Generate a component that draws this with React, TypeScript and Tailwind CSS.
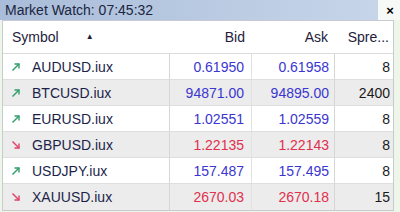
import React from 'react'

type Quote = {
  symbol: string
  bid: string
  ask: string
  spread: string
  up: boolean
}

const quotes: Quote[] = [
  { symbol: 'AUDUSD.iux', bid: '0.61950', ask: '0.61958', spread: '8', up: true },
  { symbol: 'BTCUSD.iux', bid: '94871.00', ask: '94895.00', spread: '2400', up: true },
  { symbol: 'EURUSD.iux', bid: '1.02551', ask: '1.02559', spread: '8', up: true },
  { symbol: 'GBPUSD.iux', bid: '1.22135', ask: '1.22143', spread: '8', up: false },
  { symbol: 'USDJPY.iux', bid: '157.487', ask: '157.495', spread: '8', up: true },
  { symbol: 'XAUUSD.iux', bid: '2670.03', ask: '2670.18', spread: '15', up: false },
]

function TrendArrow({ up }: { up: boolean }) {
  const color = up ? '#2e9e6a' : '#e0406a'
  return (
    <svg width="10" height="10" viewBox="0 0 10 10" className="shrink-0">
      {up ? (
        <>
          <path d="M1.5 8.5 L8 2" stroke={color} strokeWidth="1.4" fill="none" />
          <path d="M3.5 2 H8 V6.5" stroke={color} strokeWidth="1.4" fill="none" />
        </>
      ) : (
        <>
          <path d="M1.5 1.5 L8 8" stroke={color} strokeWidth="1.4" fill="none" />
          <path d="M3.5 8 H8 V3.5" stroke={color} strokeWidth="1.4" fill="none" />
        </>
      )}
    </svg>
  )
}

export default function App() {
  return (
    <div
      className="w-[400px] h-[212px] overflow-hidden bg-[#eef6ea] text-[14px] leading-none"
      style={{ fontFamily: '"Liberation Sans", Arial, sans-serif' }}
    >
      {/* Title bar */}
      <div className="flex h-[20px] items-center bg-[#f7f9f6]">
        <div className="flex h-full w-[378px] items-center bg-gradient-to-r from-[#a9bcd9] to-[#c6d5e9] pl-[5px] text-[#1b2640]">
          Market Watch: 07:45:32
        </div>
        <div className="flex flex-1 items-center justify-center pl-[2px] text-[13px] font-bold text-black">
          ×
        </div>
      </div>

      {/* Table */}
      <div className="ml-[2px] mr-[6px] border-t border-l border-r border-b border-[#c8ccd2] bg-white">
        <div className="flex h-[33px] items-center border-b border-[#dcdcdc] text-[#241c3a]">
          <div className="flex w-[167px] items-center pl-[9px]">
            <span>Symbol</span>
            <span className="ml-[27px] text-[8px]">▲</span>
          </div>
          <div className="w-[82px] pr-[7px] text-right">Bid</div>
          <div className="w-[83px] pr-[7px] text-right">Ask</div>
          <div className="flex-1 pr-[4px] text-right">Spre...</div>
        </div>

        {quotes.map((q, i) => (
          <div
            key={q.symbol}
            className={
              'flex h-[26px] items-center border-b border-[#dedede] last:border-b-0 ' +
              (i % 2 === 1 ? 'bg-[#ececec]' : 'bg-white')
            }
          >
            <div className="flex h-full w-[167px] items-center gap-[11px] border-r border-[#d6d6d6] pl-[8px] text-[#1c1f4a]">
              <TrendArrow up={q.up} />
              <span>{q.symbol}</span>
            </div>
            <div
              className={
                'flex h-full w-[82px] items-center justify-end border-r border-[#e2e2e2] pr-[7px] ' +
                (q.up ? 'text-[#3a36d0]' : 'text-[#e0304e]')
              }
            >
              {q.bid}
            </div>
            <div
              className={
                'flex h-full w-[83px] items-center justify-end border-r border-[#d6d6d6] pr-[5px] ' +
                (q.up ? 'text-[#3a36d0]' : 'text-[#e0304e]')
              }
            >
              {q.ask}
            </div>
            <div className="flex h-full flex-1 items-center justify-end pr-[3px] text-[#1a1a1a]">
              {q.spread}
            </div>
          </div>
        ))}
      </div>
    </div>
  )
}
